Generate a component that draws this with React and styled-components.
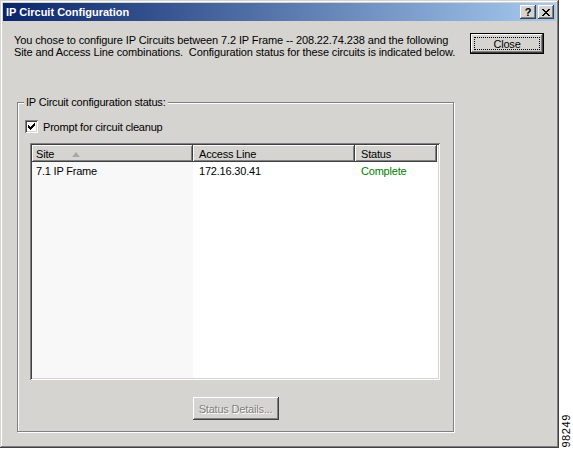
import React from 'react';
import styled, { createGlobalStyle } from 'styled-components';

const Global = createGlobalStyle`
  html, body { margin: 0; padding: 0; background: #fff; }
  body { font-family: "Liberation Sans", Arial, sans-serif; }
  * { box-sizing: border-box; }
`;

const FACE = '#d6d4d0';

const Page = styled.div`
  display: flex;
  width: 573px;
  height: 449px;
  overflow: hidden;
  background: #fff;
`;

const Window = styled.div`
  width: 559px;
  height: 448px;
  flex: none;
  background: ${FACE};
  padding: 3px;
  display: flex;
  flex-direction: column;
  box-shadow: inset -1px -1px 0 #404040, inset 1px 1px 0 ${FACE},
    inset -2px -2px 0 #808080, inset 2px 2px 0 #fff;
`;

const TitleBar = styled.div`
  height: 18px;
  display: flex;
  align-items: center;
  padding: 0 2px 0 3px;
  background: linear-gradient(to right, #0a246a, #a6caf0);
`;

const TitleText = styled.div`
  flex: 1;
  color: #fff;
  font-weight: bold;
  font-size: 11px;
  line-height: 13px;
`;

const TitleButtons = styled.div`
  display: flex;
  gap: 2px;
`;

const TitleButton = styled.div`
  width: 16px;
  height: 14px;
  background: ${FACE};
  display: flex;
  align-items: center;
  justify-content: center;
  font-weight: bold;
  font-size: 11px;
  color: #000;
  box-shadow: inset -1px -1px 0 #404040, inset 1px 1px 0 #fff,
    inset -2px -2px 0 #808080, inset 2px 2px 0 ${FACE};
`;

const Body = styled.div`
  flex: 1;
  padding: 12px 12px 0 11px;
  display: flex;
  flex-direction: column;
`;

const IntroRow = styled.div`
  display: flex;
  justify-content: space-between;
  align-items: flex-start;
`;

const Text = styled.div`
  font-size: 11px;
  line-height: 12px;
  letter-spacing: -0.2px;
  color: #000;
  white-space: nowrap;
`;

const Intro = styled(Text)`
  margin-top: 1px;
  letter-spacing: -0.12px;
`;

const Button = styled.div`
  position: relative;
  width: ${(p) => p.w}px;
  height: ${(p) => p.h}px;
  background: ${FACE};
  display: flex;
  align-items: center;
  justify-content: center;
  font-size: 11px;
  letter-spacing: -0.2px;
  color: ${(p) => (p.disabled ? '#808080' : '#000')};
  text-shadow: ${(p) => (p.disabled ? '1px 1px 0 #fff' : 'none')};
  border: ${(p) => (p.isDefault ? '1px solid #000' : 'none')};
  box-shadow: inset -1px -1px 0 #404040, inset 1px 1px 0 #fff,
    inset -2px -2px 0 #808080, inset 2px 2px 0 ${FACE};
  ${(p) =>
    p.isDefault &&
    `&::after {
      content: '';
      position: absolute;
      inset: 3px;
      border: 1px dotted #000;
    }`}
`;

const Group = styled.fieldset`
  margin: 38px 0 0 3px;
  width: 437px;
  padding: 11px 0 11px 0;
  border: 1px solid #808080;
  box-shadow: inset 1px 1px 0 #fff, 1px 1px 0 #fff;
  display: flex;
  flex-direction: column;
  align-items: flex-start;
`;

const Legend = styled.legend`
  margin-left: 6px;
  padding: 0 2px;
  font-size: 11px;
  line-height: 13px;
  letter-spacing: -0.2px;
  background: ${FACE};
  color: #000;
`;

const CheckRow = styled.div`
  display: flex;
  align-items: center;
  gap: 5px;
  margin-left: 7px;
  height: 13px;
`;

const CheckBox = styled.div`
  width: 13px;
  height: 13px;
  background: #fff;
  display: flex;
  align-items: center;
  justify-content: center;
  box-shadow: inset 1px 1px 0 #808080, inset -1px -1px 0 #fff,
    inset 2px 2px 0 #404040, inset -2px -2px 0 ${FACE};
`;

const ListView = styled.div`
  margin: 10px 0 0 12px;
  width: 410px;
  height: 237px;
  padding: 2px;
  background: #fff;
  box-shadow: inset 1px 1px 0 #808080, inset -1px -1px 0 #fff,
    inset 2px 2px 0 #404040, inset -2px -2px 0 ${FACE};
  display: flex;
  flex-direction: column;
`;

const Header = styled.div`
  display: flex;
  height: 17px;
  flex: none;
`;

const HeaderCell = styled.div`
  width: ${(p) => p.w}px;
  height: 17px;
  background: ${FACE};
  display: flex;
  align-items: center;
  gap: 18px;
  padding-left: ${(p) => p.pad}px;
  padding-top: 1px;
  font-size: 11px;
  letter-spacing: -0.2px;
  color: #000;
  box-shadow: inset -1px -1px 0 #404040, inset 1px 1px 0 #fff,
    inset -2px -2px 0 #808080;
`;

const ListBody = styled.div`
  flex: 1;
  padding-top: 1px;
  background: linear-gradient(to right, #f8f8f8 161px, #fff 161px);
`;

const Row = styled.div`
  display: flex;
  height: 15px;
  align-items: center;
`;

const Cell = styled.div`
  width: ${(p) => p.w}px;
  padding-left: ${(p) => p.pad}px;
  font-size: 11px;
  line-height: 14px;
  letter-spacing: -0.2px;
  color: ${(p) => p.color || '#000'};
  white-space: nowrap;
`;

const ButtonRow = styled.div`
  align-self: stretch;
  display: flex;
  justify-content: center;
  margin-top: 17px;
`;

const Strip = styled.div`
  flex: 1;
  display: flex;
  align-items: flex-end;
  justify-content: center;
  padding-bottom: 1px;
`;

const FigNumber = styled.div`
  writing-mode: vertical-rl;
  transform: rotate(180deg);
  font-size: 11px;
  letter-spacing: 0.6px;
  color: #000;
  line-height: 11px;
`;

const columns = [
  { w: 161, pad: 4 },
  { w: 162, pad: 6 },
  { w: 82, pad: 6 },
];

export default function App() {
  return (
    <Page>
      <Global />
      <Window>
        <TitleBar>
          <TitleText>IP Circuit Configuration</TitleText>
          <TitleButtons>
            <TitleButton>?</TitleButton>
            <TitleButton>
              <svg width="8" height="7" viewBox="0 0 8 7" shapeRendering="crispEdges">
                <path
                  d="M0 0h2v1H0zM6 0h2v1H6zM1 1h2v1H1zM5 1h2v1H5zM2 2h4v1H2zM3 3h2v1H3zM2 4h4v1H2zM1 5h2v1H1zM5 5h2v1H5zM0 6h2v1H0zM6 6h2v1H6z"
                  fill="#000"
                />
              </svg>
            </TitleButton>
          </TitleButtons>
        </TitleBar>
        <Body>
          <IntroRow>
            <Intro>
              You chose to configure IP Circuits between 7.2 IP Frame -- 208.22.74.238 and the following
              <br />
              Site and Access Line combinations.&nbsp; Configuration status for these circuits is indicated below.
            </Intro>
            <Button w={74} h={21} isDefault>
              Close
            </Button>
          </IntroRow>
          <Group>
            <Legend>IP Circuit configuration status:</Legend>
            <CheckRow>
              <CheckBox>
                <svg width="7" height="7" viewBox="0 0 7 7" shapeRendering="crispEdges">
                  <path
                    d="M6 0h1v1H6zM5 1h2v1H5zM0 2h1v1H0zM4 2h3v1H4zM0 3h2v1H0zM3 3h3v1H3zM0 4h5v1H0zM1 5h3v1H1zM2 6h1v1H2z"
                    fill="#000"
                  />
                </svg>
              </CheckBox>
              <Text>Prompt for circuit cleanup</Text>
            </CheckRow>
            <ListView>
              <Header>
                <HeaderCell w={columns[0].w} pad={columns[0].pad}>
                  Site
                  <svg width="8" height="5" viewBox="0 0 8 5">
                    <polygon points="4,0 8,5 0,5" fill="#a8a8a8" />
                  </svg>
                </HeaderCell>
                <HeaderCell w={columns[1].w} pad={columns[1].pad}>
                  Access Line
                </HeaderCell>
                <HeaderCell w={columns[2].w} pad={columns[2].pad}>
                  Status
                </HeaderCell>
              </Header>
              <ListBody>
                <Row>
                  <Cell w={columns[0].w} pad={columns[0].pad}>7.1 IP Frame</Cell>
                  <Cell w={columns[1].w} pad={columns[1].pad}>172.16.30.41</Cell>
                  <Cell w={columns[2].w} pad={columns[2].pad} color="#008000">
                    Complete
                  </Cell>
                </Row>
              </ListBody>
            </ListView>
            <ButtonRow>
              <Button w={86} h={23} disabled>
                Status Details...
              </Button>
            </ButtonRow>
          </Group>
        </Body>
      </Window>
      <Strip>
        <FigNumber>98249</FigNumber>
      </Strip>
    </Page>
  );
}
